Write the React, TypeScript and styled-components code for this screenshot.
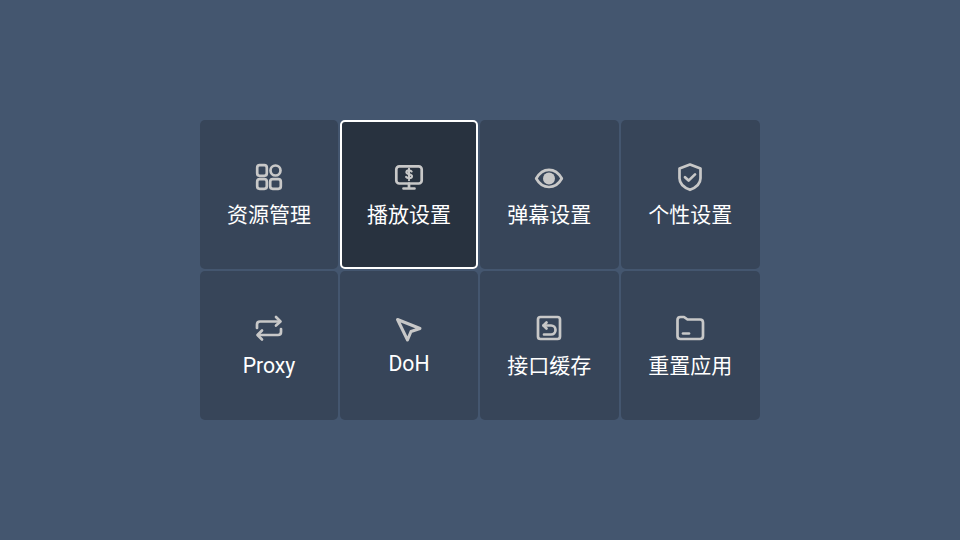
import { FC, ReactNode } from "react";
import styled, { createGlobalStyle } from "styled-components";

const GlobalStyle = createGlobalStyle`
    html, body {
        margin: 0;
        padding: 0;
        height: 100%;
    }
    #root {
        height: 100%;
    }
`;

const Screen = styled.div`
    width: 960px;
    height: 540px;
    display: flex;
    align-items: center;
    justify-content: center;
    background: #44566f;
    font-family: Roboto, "Noto Sans CJK SC", sans-serif;
`;

const Grid = styled.div`
    width: 560px;
    height: 300px;
    display: grid;
    grid-template-columns: 138px 138px 138.5px 139.5px;
    grid-template-rows: repeat(2, 1fr);
    gap: 2px;
`;

const Tile = styled.div<{ $active?: boolean }>`
    display: flex;
    flex-direction: column;
    align-items: center;
    justify-content: center;
    gap: 7px;
    padding-top: 2px;
    box-sizing: border-box;
    border-radius: 5px;
    background: ${(p) => (p.$active ? "#28323f" : "#374559")};
    border: ${(p) => (p.$active ? "2px solid #ffffff" : "none")};
`;

const Glyph = styled.svg`
    width: 32px;
    height: 32px;
    fill: none;
    stroke: #c8c8c8;
    stroke-width: 2.7;
    stroke-linecap: round;
    stroke-linejoin: round;
`;

const Label = styled.span<{ $latin?: boolean; $raised?: boolean }>`
    color: #ffffff;
    font-size: ${(p) => (p.$latin ? "21.2px" : "21px")};
    line-height: 30px;
    margin-top: ${(p) => (p.$raised ? "-2px" : "0")};
    margin-bottom: ${(p) => (p.$raised ? "2px" : "0")};
`;

const Apps = () => (
    <Glyph viewBox="0 0 32 32">
        <rect x="4.200" y="4.200" width="9.600" height="10.600" rx="2.500" />
        <circle cx="22.500" cy="9.500" r="5" />
        <rect x="4.200" y="18.200" width="9.600" height="9.600" rx="2.500" />
        <rect x="17.200" y="18.200" width="10.600" height="9.600" rx="2.500" />
    </Glyph>
);

const Monitor = () => (
    <Glyph viewBox="0 0 32 32">
        <rect x="3.300" y="5.300" width="25.400" height="17.200" rx="3" />
        <path d="M16 22.500V27M10.500 27.500h11" />
        <path
            d="M18.600 10.500c-.5-.8-1.400-1.200-2.600-1.200-1.500 0-2.600.7-2.600 1.900 0 2.600 5.600 1.300 5.600 4 0 1.200-1.200 2-2.900 2-1.400 0-2.500-.5-3-1.300M16 7.800v11.400"
            strokeWidth="2.100"
        />
    </Glyph>
);

const Eye = () => (
    <Glyph viewBox="0 0 32 32">
        <path d="M3.200 17.500C6 12.500 10.500 8.800 16 8.800s10 3.700 12.800 8.700C26 22.500 21.500 26 16 26S6 22.500 3.200 17.500Z" />
        <circle cx="16" cy="17.500" r="6" fill="#c8c8c8" stroke="none" />
    </Glyph>
);

const Shield = () => (
    <Glyph viewBox="0 0 32 32">
        <path d="M16 3.500 26.500 7.600v9.600c0 5.600-4.400 9.200-10.500 11.600C9.900 26.400 5.500 22.800 5.500 17.200V7.600Z" />
        <path d="M11 16.200l3.600 3.400 6.400-6.200" />
    </Glyph>
);

const Repeat = () => (
    <Glyph viewBox="0 0 32 32">
        <path d="M26.500 9.500H7c-2 0-3 1-3 3V16" />
        <path d="M23 5l4.500 4.500L23 13.500" />
        <path d="M5.500 23H25c2 0 3-1 3-3v-3" />
        <path d="M9 18.500 4.500 23 9 27.500" />
    </Glyph>
);

const Pointer = () => (
    <Glyph viewBox="0 0 32 32">
        <path d="M4.500 7.500 27 16.500 18 19.500 14.500 28Z" strokeWidth="3" />
    </Glyph>
);

const Undo = () => (
    <Glyph viewBox="0 0 32 32">
        <rect x="5" y="5" width="22" height="22" rx="2.500" />
        <path d="M10.500 13.500h7.500c2.600 0 4.500 1.800 4.500 4.500s-1.900 4.500-4.500 4.500h-7" />
        <path d="M13.500 10.500 10.500 13.500l3 3" />
    </Glyph>
);

const Folder = () => (
    <Glyph viewBox="0 0 32 32">
        <path d="M3.500 8c0-2 1-3 3-3h3.500l3.500 2.500h12.500c2 0 3 1 3 3V24c0 2-1 3-3 3h-19.500c-2 0-3-1-3-3Z" />
        <path d="M9 21.500h6" />
    </Glyph>
);

interface MenuItem {
    label: string;
    icon: ReactNode;
    active?: boolean;
    latin?: boolean;
    raised?: boolean;
}

const items: MenuItem[] = [
    { label: "资源管理", icon: <Apps /> },
    { label: "播放设置", icon: <Monitor />, active: true },
    { label: "弹幕设置", icon: <Eye /> },
    { label: "个性设置", icon: <Shield /> },
    { label: "Proxy", icon: <Repeat />, latin: true },
    { label: "DoH", icon: <Pointer />, latin: true, raised: true },
    { label: "接口缓存", icon: <Undo /> },
    { label: "重置应用", icon: <Folder /> },
];

const App: FC = () => (
    <Screen>
        <GlobalStyle />
        <Grid>
            {items.map((item) => (
                <Tile key={item.label} $active={item.active}>
                    {item.icon}
                    <Label $latin={item.latin} $raised={item.raised}>
                        {item.label}
                    </Label>
                </Tile>
            ))}
        </Grid>
    </Screen>
);

export default App;
